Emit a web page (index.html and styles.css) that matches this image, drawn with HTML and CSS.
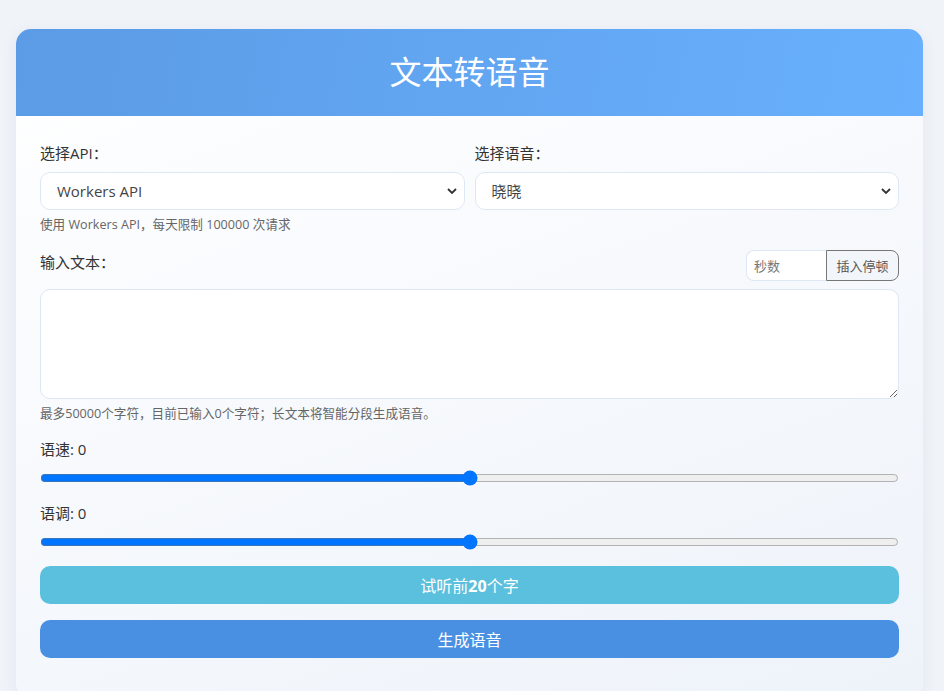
FILE: index.html
```html
<!DOCTYPE html>
<html lang="zh-CN">
<head>
<meta charset="utf-8">
<title>文本转语音</title>
<link rel="stylesheet" href="styles.css">
</head>
<body>
<div class="card">
  <div class="card-header"><h1 class="title">文本转语音</h1></div>
  <div class="card-body">
    <div class="row-2">
      <div class="field">
        <label class="label">选择API：</label>
        <select class="select"><option>Workers API</option></select>
        <div class="hint">使用 Workers API，每天限制 100000 次请求</div>
      </div>
      <div class="field">
        <label class="label">选择语音：</label>
        <select class="select"><option>晓晓</option></select>
      </div>
    </div>
    <div class="text-head">
      <label class="label text-label">输入文本：</label>
      <div class="pause-group">
        <input class="pause-input" type="text" placeholder="秒数">
        <button class="pause-btn">插入停顿</button>
      </div>
    </div>
    <textarea class="textarea"></textarea>
    <div class="hint">最多50000个字符，目前已输入0个字符；长文本将智能分段生成语音。</div>
    <div class="slider-group">
      <label class="label">语速: 0</label>
      <input class="range" type="range" min="-100" max="100" value="0">
    </div>
    <div class="slider-group">
      <label class="label">语调: 0</label>
      <input class="range" type="range" min="-100" max="100" value="0">
    </div>
    <button class="btn btn-preview">试听前<span class="num">20</span>个字</button>
    <button class="btn btn-generate">生成语音</button>
  </div>
</div>
</body>
</html>
```
FILE: styles.css
```css
* { box-sizing: border-box; }
html, body { margin: 0; }
body {
  background: #f0f3f8;
  padding: 29px 21px 20px 16px;
  font-family: "Open Sans", "Noto Sans CJK SC", sans-serif;
  color: #333;
}
.card {
  border-radius: 15px;
  overflow: hidden;
  background: linear-gradient(160deg, #ffffff 0%, #eef3fa 100%);
  box-shadow: 0 4px 16px rgba(60, 90, 140, 0.08);
}
.card-header {
  height: 87px;
  display: flex;
  align-items: center;
  justify-content: center;
  background: linear-gradient(100deg, #5c9be5 0%, #68b0fd 100%);
}
.title {
  margin: 0;
  color: #fff;
  font-size: 32px;
  font-weight: 400;
  line-height: 1;
  padding-bottom: 1px;
}
.card-body {
  padding: 26px 24px 40px 24px;
  display: flex;
  flex-direction: column;
}
.row-2 {
  display: grid;
  grid-template-columns: 1fr 1fr;
  column-gap: 10px;
}
.field { display: flex; flex-direction: column; }
.label {
  font-size: 15px;
  line-height: 22px;
  color: #333;
}
.field .label { margin-bottom: 8px; }
.select {
  appearance: none;
  -webkit-appearance: none;
  height: 38px;
  border: 1px solid #dde7f5;
  border-radius: 10px;
  background: #fff url("data:image/svg+xml;utf8,<svg xmlns='http://www.w3.org/2000/svg' width='10' height='6' viewBox='0 0 10 6'><path d='M1 1l4 4 4-4' fill='none' stroke='%23333' stroke-width='1.8'/></svg>") no-repeat right 7px center;
  padding: 0 16px;
  font-family: inherit;
  font-size: 15px;
  color: #444;
}
.hint {
  font-size: 12.6px;
  line-height: 18px;
  color: #666;
  margin-top: 6px;
}
.text-head {
  display: flex;
  align-items: flex-start;
  justify-content: space-between;
  margin-top: 16px;
}
.text-label { margin-top: 1px; }
.pause-group { display: flex; height: 31px; }
.pause-input {
  width: 80px;
  border: 1px solid #dde7f5;
  border-right: none;
  border-radius: 8px 0 0 8px;
  padding: 0 7px;
  font-family: inherit;
  font-size: 13px;
  color: #333;
  background: #fff;
}
.pause-input::placeholder { color: #777; }
.pause-btn {
  width: 73px;
  border: 1px solid #777;
  border-radius: 0 8px 8px 0;
  background: #f2f5f9;
  font-family: inherit;
  font-size: 13px;
  color: #555;
  padding: 0;
}
.textarea {
  margin-top: 8px;
  height: 110px;
  border: 1px solid #dde7f5;
  border-radius: 10px;
  background: #fff;
  resize: vertical;
  font-family: inherit;
}
.slider-group {
  display: flex;
  flex-direction: column;
  margin-top: 15px;
}
.slider-group + .slider-group { margin-top: 16px; }
.range {
  width: 100%;
  margin: 10px 0 0 0;
  accent-color: #0075ff;
}
.btn {
  height: 38px;
  border: none;
  border-radius: 10px;
  color: #fff;
  font-family: inherit;
  font-size: 16px;
  width: 100%;
}
.num { font-weight: 700; }
.btn-preview {
  background: #5bc0de;
  margin-top: 16px;
}
.btn-generate {
  background: #4a90e2;
  margin-top: 16px;
}
```
